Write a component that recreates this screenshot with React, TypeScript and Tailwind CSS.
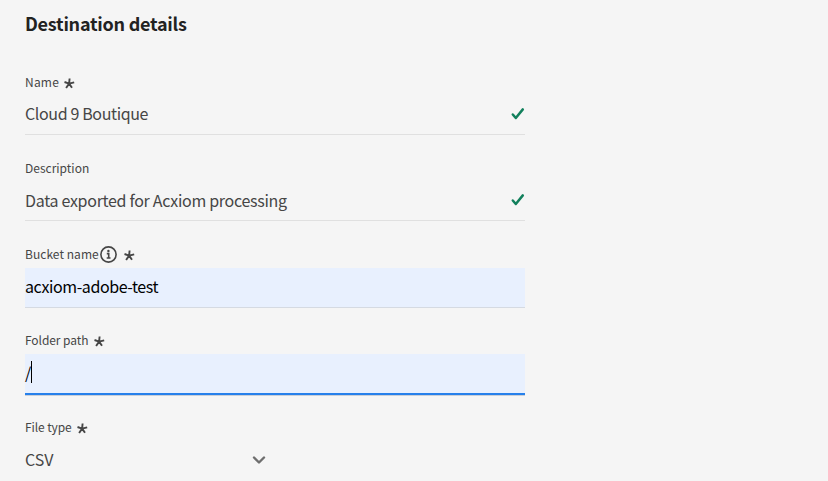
import type { ReactNode } from 'react';

function Star() {
  return (
    <svg className="mt-[9px] shrink-0" width="11" height="11" viewBox="0 0 11 11" fill="none" stroke="#464646" strokeWidth="1.9">
      <path d="M5.1 5.6L5.6 0.5M5.1 5.6L0.5 4M5.1 5.6L10.2 4.4M5.1 5.6L2.1 10M5.1 5.6L8 9.8" />
    </svg>
  );
}

function Info() {
  return (
    <svg className="mt-[5px] ml-[1px] shrink-0" width="17" height="17" viewBox="0 0 17 17" fill="none" stroke="#464646" strokeWidth="1.6">
      <circle cx="8.5" cy="8.5" r="7.6" />
      <path d="M6.8 7.6H8.7V12M6.7 12H10.5" />
      <circle cx="8.4" cy="5" r="1.2" fill="#464646" stroke="none" />
    </svg>
  );
}

function Check() {
  return (
    <svg className="mt-[12px] shrink-0" width="14" height="13" viewBox="0 0 14 13" fill="none" stroke="#12805c" strokeWidth="2.5" strokeLinecap="round" strokeLinejoin="round">
      <path d="M1.8 7.5L4.8 11L11.8 2.4" />
    </svg>
  );
}

function Label({ text, tracking = '', className = 'h-[26px]', children }: { text: string; tracking?: string; className?: string; children?: ReactNode }) {
  return (
    <div className={`flex items-start text-[12px] text-[#464646] ${className}`}>
      <span className={`mt-[3px] leading-[20px] ${tracking}`}>{text}</span>
      {children}
    </div>
  );
}

export default function App() {
  return (
    <main className="flex h-[481px] w-[828px] flex-col overflow-hidden bg-[#f5f5f5] pl-[25px] font-['Noto_Sans_CJK_SC','Noto_Sans',sans-serif] whitespace-nowrap">
      <h1 className="h-[69px] pt-[11px] text-[18px] leading-[24px] font-bold tracking-[-0.25px] text-[#222]">
        <span>Destination details</span>
      </h1>

      <section className="h-[86px] w-[500px]">
        <Label text="Name" tracking="tracking-[0.2px]"><span className="w-[5px]" /><Star /></Label>
        <div className="flex h-[40px] justify-between border-b border-[#e0e0e0] text-[16px] text-[#464646]">
          <span className="pt-[6px] leading-[24px] tracking-[-0.37px]">Cloud 9 Boutique</span>
          <Check />
        </div>
      </section>

      <section className="h-[86px] w-[500px]">
        <Label text="Description" />
        <div className="flex h-[40px] justify-between border-b border-[#e0e0e0] text-[16px] text-[#464646]">
          <span className="pt-[7px] leading-[24px] tracking-[-0.3px]">Data exported for Acxiom processing</span>
          <Check />
        </div>
      </section>

      <section className="h-[86px] w-[500px]">
        <Label text="Bucket name" tracking="tracking-[0.05px]" className="h-[27px]"><Info /><span className="w-[7px]" /><Star /></Label>
        <div className="h-[40px] border-b border-[#d5dae2] bg-[#e8f0fe] pt-[6px] text-[16px] leading-[24px] tracking-[-0.42px] text-black">
          <span>acxiom-adobe-test</span>
        </div>
      </section>

      <section className="h-[87px] w-[500px]">
        <Label text="Folder path" tracking="tracking-[-0.07px]" className="h-[27px]"><span className="w-[6px]" /><Star /></Label>
        <div className="flex h-[41px] border-b-2 border-[#2680eb] bg-[#e8f0fe] pt-[7px] text-[16px] leading-[22px] text-black">
          <span className="w-[6px]">/</span>
          <span className="h-[22px] w-px bg-black" />
        </div>
        <div className="h-px bg-[#c9cfd8]" />
      </section>

      <section className="w-[241px]">
        <Label text="File type" tracking="tracking-[-0.1px]"><span className="w-[5px]" /><Star /></Label>
        <div className="flex h-[40px] justify-between text-[16px] text-[#464646]">
          <span className="pt-[7px] leading-[24px]">CSV</span>
          <svg className="mt-[16px]" width="14" height="9" viewBox="0 0 14 9" fill="none" stroke="#6e6e6e" strokeWidth="2.4" strokeLinecap="round" strokeLinejoin="round">
            <path d="M2 1.5L7 6.5L12 1.5" />
          </svg>
        </div>
      </section>
    </main>
  );
}
